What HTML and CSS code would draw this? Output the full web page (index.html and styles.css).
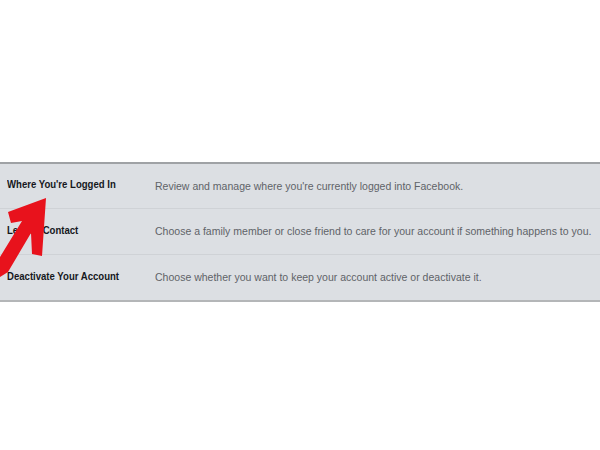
FILE: index.html
```html
<!DOCTYPE html>
<html>
<head>
<meta charset="utf-8">
<link rel="stylesheet" href="styles.css">
</head>
<body>
<div class="page">
  <div class="panel">
    <div class="row">
      <div class="label"><span class="squash-label">Where You're Logged In</span></div>
      <div class="desc"><span class="squash-desc">Review and manage where you're currently logged into Facebook.</span></div>
    </div>
    <div class="row">
      <div class="label"><span class="squash-label">Legacy Contact</span></div>
      <div class="desc"><span class="squash-desc">Choose a family member or close friend to care for your account if something happens to you.</span></div>
    </div>
    <div class="row">
      <div class="label"><span class="squash-label">Deactivate Your Account</span></div>
      <div class="desc"><span class="squash-desc">Choose whether you want to keep your account active or deactivate it.</span></div>
    </div>
  </div>
  <svg class="arrow" width="60" height="90" viewBox="0 190 60 90">
    <polygon points="46,198 8,212 11,223 22,221 0,257 0,277 8,272 31,233 32,254 42,256" fill="#e8121c"/>
  </svg>
</div>
</body>
</html>
```
FILE: styles.css
```css
html, body {
  margin: 0;
  padding: 0;
  background: #ffffff;
  overflow: hidden;
}
.page {
  position: relative;
  width: 600px;
  height: 450px;
  padding-top: 162px;
  box-sizing: border-box;
  overflow: hidden;
}
.panel {
  background: #dcdfe3;
  border-top: 2px solid #9fa2a5;
  border-bottom: 2px solid #b4b6b8;
  font-family: "Liberation Sans", Arial, sans-serif;
}
.row {
  display: grid;
  grid-template-columns: 155px minmax(0, 1fr);
  align-items: center;
  height: 45px;
  border-top: 1px solid #cfd2d6;
}
.row:first-child {
  border-top: none;
  height: 44px;
}
.label {
  padding-left: 7px;
  font-size: 11px;
  font-weight: bold;
  color: #15171c;
  margin-top: -4px;
  white-space: nowrap;
  min-width: 0;
  overflow: hidden;
}
.desc {
  font-size: 11.5px;
  color: #5f6368;
  white-space: nowrap;
  margin-top: -1px;
  min-width: 0;
  overflow: hidden;
}
.squash-label {
  display: inline-block;
  transform: scaleX(0.87);
  transform-origin: left center;
}
.squash-desc {
  display: inline-block;
  transform: scaleX(0.914);
  transform-origin: left center;
}
.arrow {
  position: absolute;
  left: 0;
  top: 190px;
}
```
